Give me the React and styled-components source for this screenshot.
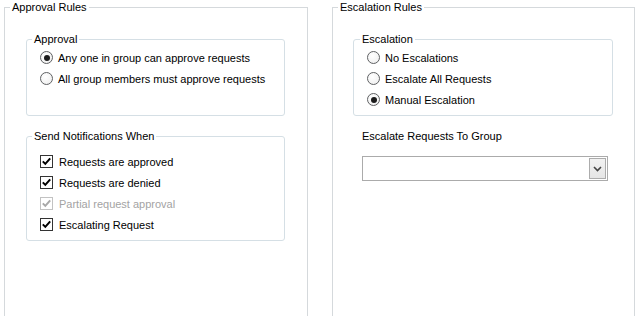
import React from "react";
import styled, { createGlobalStyle } from "styled-components";

const GlobalStyle = createGlobalStyle`
  body {
    margin: 0;
    background: #ffffff;
    font-family: "Liberation Sans", Arial, sans-serif;
    font-size: 11px;
    color: #000;
    overflow: hidden;
  }
`;

const Page = styled.div`
  display: flex;
  gap: 24px;
  padding-left: 4px;
  height: 316px;
  overflow: hidden;
`;

const OuterGroup = styled.fieldset`
  box-sizing: border-box;
  width: ${(p) => p.$w}px;
  height: 360px;
  margin: 0;
  padding: 18px 0 0 0;
  border: 1px solid #d5d9dc;
  min-inline-size: 0;
`;

const Legend = styled.legend`
  margin-left: ${(p) => p.$ml ?? 5}px;
  padding: 0 2px;
  line-height: 14px;
  font-size: 11px;
`;

const Column = styled.div`
  display: flex;
  flex-direction: column;
  align-items: flex-start;
  gap: 13px;
  padding-left: ${(p) => p.$pl}px;
`;

const InnerGroup = styled.fieldset`
  box-sizing: border-box;
  width: ${(p) => p.$w}px;
  margin: 0;
  padding: 0;
  border: 1px solid #d5dfe5;
  border-radius: 3px;
  min-inline-size: 0;
`;

const Options = styled.div`
  display: flex;
  flex-direction: column;
  padding: ${(p) => p.$pt}px 0 ${(p) => p.$pb}px 13px;
`;

const Option = styled.label`
  display: flex;
  align-items: center;
  height: 21px;
  gap: ${(p) => p.$gap}px;
  color: ${(p) => (p.$disabled ? "#a3a3a3" : "#000")};
  white-space: nowrap;
`;

const RadioCircle = styled.span`
  box-sizing: border-box;
  width: 13px;
  height: 13px;
  border-radius: 50%;
  border: 1px solid #5f6163;
  background: radial-gradient(circle at 40% 35%, #ffffff 0%, #f2f2f2 70%, #e2e2e2 100%);
  display: flex;
  align-items: center;
  justify-content: center;
  flex: none;

  &::after {
    content: "";
    display: ${(p) => (p.$checked ? "block" : "none")};
    width: 6px;
    height: 6px;
    border-radius: 50%;
    background: #1b1b1b;
  }
`;

const CheckBox = styled.span`
  box-sizing: border-box;
  width: 13px;
  height: 13px;
  border: 1px solid ${(p) => (p.$disabled ? "#c2c2c2" : "#333333")};
  background: #fff;
  display: flex;
  align-items: center;
  justify-content: center;
  flex: none;
`;

const FieldLabel = styled.div`
  margin-left: 9px;
  line-height: 14px;
`;

const Select = styled.div`
  box-sizing: border-box;
  margin-left: 9px;
  width: 246px;
  height: 25px;
  border: 1px solid #ababab;
  background: #fff;
  display: flex;
  justify-content: flex-end;
  align-items: center;
  padding-right: 1px;
`;

const DropButton = styled.div`
  box-sizing: border-box;
  width: 17px;
  height: 21px;
  border: 1px solid #acacac;
  background: linear-gradient(#f2f2f2, #e5e5e5);
  display: flex;
  align-items: center;
  justify-content: center;
`;

function Radio({ checked, children }) {
  return (
    <Option $gap={5}>
      <RadioCircle $checked={checked} />
      {children}
    </Option>
  );
}

function Check({ disabled, children }) {
  return (
    <Option $gap={6} $disabled={disabled}>
      <CheckBox $disabled={disabled}>
        <svg width="11" height="11" viewBox="0 0 11 11">
          <path
            d="M1.8 5.4 L4.3 7.9 L9.2 2.4"
            fill="none"
            stroke={disabled ? "#a8a8a8" : "#000"}
            strokeWidth="2"
          />
        </svg>
      </CheckBox>
      {children}
    </Option>
  );
}

export default function App() {
  return (
    <>
      <GlobalStyle />
      <Page>
        <OuterGroup $w={304}>
          <Legend>Approval Rules</Legend>
          <Column $pl={21}>
            <InnerGroup $w={259}>
              <Legend>Approval</Legend>
              <Options $pt={1} $pb={26}>
                <Radio checked>Any one in group can approve requests</Radio>
                <Radio>All group members must approve requests</Radio>
              </Options>
            </InnerGroup>
            <InnerGroup $w={259}>
              <Legend>Send Notifications When</Legend>
              <Options $pt={8} $pb={5}>
                <Check>Requests are approved</Check>
                <Check>Requests are denied</Check>
                <Check disabled>Partial request approval</Check>
                <Check>Escalating Request</Check>
              </Options>
            </InnerGroup>
          </Column>
        </OuterGroup>
        <OuterGroup $w={303}>
          <Legend>Escalation Rules</Legend>
          <Column $pl={20}>
            <InnerGroup $w={260}>
              <Legend $ml={6}>Escalation</Legend>
              <Options $pt={1} $pb={5}>
                <Radio>No Escalations</Radio>
                <Radio>Escalate All Requests</Radio>
                <Radio checked>Manual Escalation</Radio>
              </Options>
            </InnerGroup>
            <FieldLabel>Escalate Requests To Group</FieldLabel>
            <Select>
              <DropButton>
                <svg width="9" height="6" viewBox="0 0 9 6">
                  <path d="M1 1 L4.5 4.5 L8 1" fill="none" stroke="#444" strokeWidth="1.6" />
                </svg>
              </DropButton>
            </Select>
          </Column>
        </OuterGroup>
      </Page>
    </>
  );
}
